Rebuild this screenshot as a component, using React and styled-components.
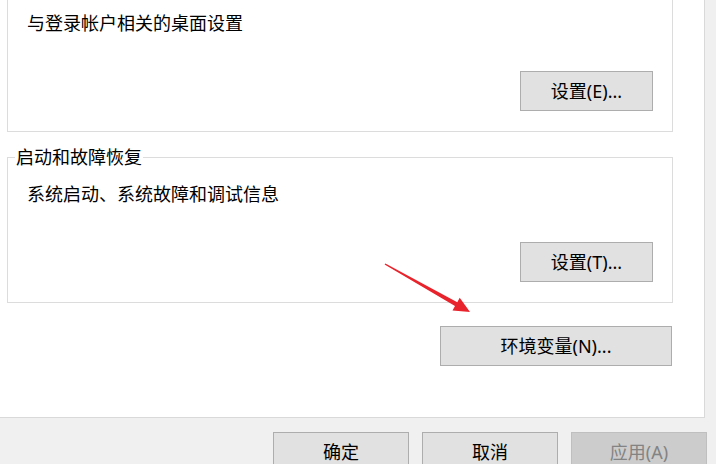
import styled, { createGlobalStyle } from 'styled-components';

const GlobalStyle = createGlobalStyle`
  html,
  body {
    margin: 0;
    padding: 0;
    background: #f0f0f0;
    overflow: hidden;
  }
  * {
    box-sizing: border-box;
  }
`;

const Window = styled.div`
  position: relative;
  width: 716px;
  height: 464px;
  overflow: hidden;
  background: #f0f0f0;
  font-family: 'Noto Sans', 'Noto Sans CJK SC', sans-serif;
  font-size: 18px;
  color: #000;
`;

const TabPanel = styled.div`
  display: flex;
  flex-direction: column;
  width: 705px;
  height: 418px;
  padding-left: 7px;
  background: #fff;
  border-right: 1px solid #d9d9d9;
  border-bottom: 1px solid #d9d9d9;
  overflow: hidden;
`;

const GroupBox = styled.fieldset`
  width: 666px;
  margin: ${(p) => (p.$first ? '-3px' : '13px')} 0 0 0;
  padding: 0 19px 20px 19px;
  border: 1px solid #dcdcdc;
  min-inline-size: 0;
`;

const Legend = styled.legend`
  margin-left: -12px;
  padding: 0 1px;
  line-height: 24px;
`;

const Description = styled.div`
  margin-top: 13px;
  line-height: 24px;
`;

const ButtonRow = styled.div`
  display: flex;
  justify-content: flex-end;
  margin-top: ${(p) => p.$top || 0}px;
  padding-right: ${(p) => p.$inset || 0}px;
`;

const Button = styled.button`
  width: ${(p) => p.$width}px;
  height: 40px;
  padding: 0;
  border: 1px solid #adadad;
  background: #e1e1e1;
  font: inherit;
  line-height: 38px;
  color: #000;
  text-align: center;

  &:disabled {
    background: #cccccc;
    border-color: #bfbfbf;
    color: #838383;
  }
`;

const EnvRow = styled(ButtonRow)`
  width: 666px;
`;

const DialogFooter = styled.div`
  display: flex;
  justify-content: flex-end;
  gap: 13px;
  margin-top: 14px;
  padding-right: 9px;
`;

const Annotation = styled.svg`
  position: absolute;
  left: 0;
  top: 0;
  pointer-events: none;
`;

const App = () => {
  return (
    <Window>
      <GlobalStyle />
      <TabPanel>
        <GroupBox $first>
          <Description>与登录帐户相关的桌面设置</Description>
          <ButtonRow $top={36}>
            <Button $width={133}>设置(E)...</Button>
          </ButtonRow>
        </GroupBox>

        <GroupBox>
          <Legend>启动和故障恢复</Legend>
          <Description>系统启动、系统故障和调试信息</Description>
          <ButtonRow $top={36}>
            <Button $width={133}>设置(T)...</Button>
          </ButtonRow>
        </GroupBox>

        <EnvRow $top={23} $inset={1}>
          <Button $width={232}>环境变量(N)...</Button>
        </EnvRow>
      </TabPanel>

      <DialogFooter>
        <Button $width={136}>确定</Button>
        <Button $width={136}>取消</Button>
        <Button $width={136} disabled>
          应用(A)
        </Button>
      </DialogFooter>

      {/* red arrow pointing at the env button */}
      <Annotation width="716" height="464" viewBox="0 0 716 464">
        <polygon
          fill="#e8232b"
          points="384.6,264.5 385.4,263.5 457.3,302.2 459.7,297.8 470,312 452.5,310.4 455,306"
        />
      </Annotation>
    </Window>
  );
};

export default App;
